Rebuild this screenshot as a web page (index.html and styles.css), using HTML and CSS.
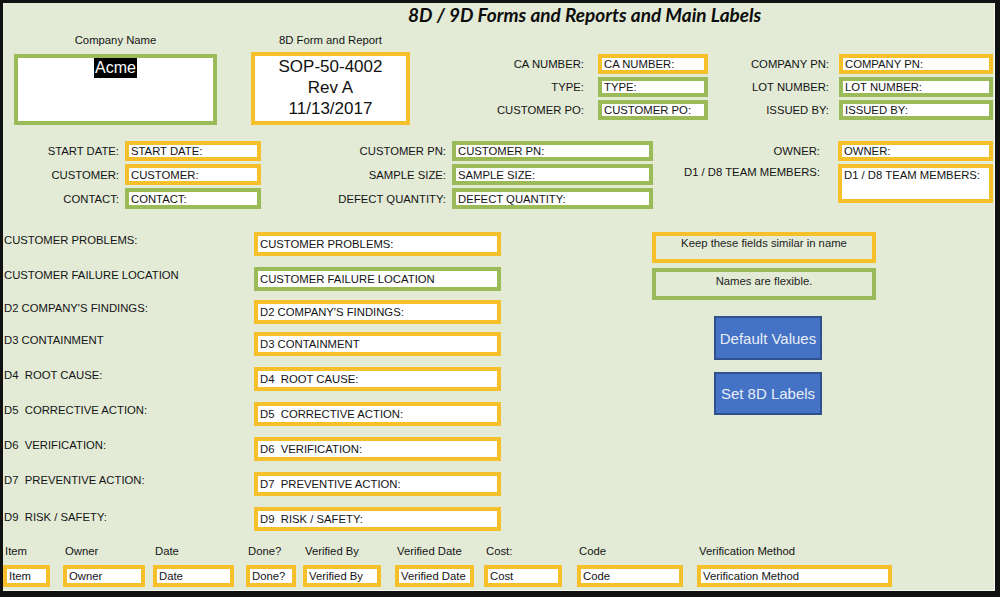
FILE: index.html
```html
<!DOCTYPE html>
<html>
<head>
<meta charset="utf-8">
<link rel="stylesheet" href="styles.css">
</head>
<body>
<div class="frame">
  <div class="title">8D / 9D Forms and Reports and Main Labels</div>

  <div class="row-a">
    <div class="company">
      <div class="cap cap-company">Company Name</div>
      <div class="bigbox green company-box"><span class="sel">Acme</span></div>
    </div>
    <div class="form">
      <div class="cap cap-form">8D Form and Report</div>
      <div class="bigbox gold form-box">SOP-50-4002<br>Rev A<br>11/13/2017</div>
    </div>
    <div class="pairs pairs-ca">
      <div class="lbl">CA NUMBER:</div><div class="fld gold">CA NUMBER:</div>
      <div class="lbl">TYPE:</div><div class="fld green">TYPE:</div>
      <div class="lbl">CUSTOMER PO:</div><div class="fld green">CUSTOMER PO:</div>
    </div>
    <div class="pairs pairs-pn">
      <div class="lbl">COMPANY PN:</div><div class="fld gold">COMPANY PN:</div>
      <div class="lbl">LOT NUMBER:</div><div class="fld green">LOT NUMBER:</div>
      <div class="lbl">ISSUED BY:</div><div class="fld green">ISSUED BY:</div>
    </div>
  </div>

  <div class="row-b">
    <div class="pairs pairs-start">
      <div class="lbl">START DATE:</div><div class="fld gold">START DATE:</div>
      <div class="lbl">CUSTOMER:</div><div class="fld gold">CUSTOMER:</div>
      <div class="lbl">CONTACT:</div><div class="fld green">CONTACT:</div>
    </div>
    <div class="pairs pairs-cpn">
      <div class="lbl">CUSTOMER PN:</div><div class="fld green">CUSTOMER PN:</div>
      <div class="lbl">SAMPLE SIZE:</div><div class="fld green">SAMPLE SIZE:</div>
      <div class="lbl">DEFECT QUANTITY:</div><div class="fld green">DEFECT QUANTITY:</div>
    </div>
    <div class="pairs pairs-owner">
      <div class="lbl">OWNER:</div><div class="fld gold">OWNER:</div>
      <div class="lbl lbl-top">D1 / D8 TEAM MEMBERS:</div><div class="fld gold fld-tall">D1 / D8 TEAM MEMBERS:</div>
    </div>
  </div>

  <div class="row-c">
    <div class="list">
      <div class="item-lbl">CUSTOMER PROBLEMS:</div><div class="fld gold">CUSTOMER PROBLEMS:</div>
      <div class="item-lbl">CUSTOMER FAILURE LOCATION</div><div class="fld green">CUSTOMER FAILURE LOCATION</div>
      <div class="item-lbl">D2 COMPANY'S FINDINGS:</div><div class="fld gold">D2 COMPANY'S FINDINGS:</div>
      <div class="item-lbl">D3 CONTAINMENT</div><div class="fld gold">D3 CONTAINMENT</div>
      <div class="item-lbl">D4&nbsp; ROOT CAUSE:</div><div class="fld gold">D4&nbsp; ROOT CAUSE:</div>
      <div class="item-lbl">D5&nbsp; CORRECTIVE ACTION:</div><div class="fld gold">D5&nbsp; CORRECTIVE ACTION:</div>
      <div class="item-lbl">D6&nbsp; VERIFICATION:</div><div class="fld gold">D6&nbsp; VERIFICATION:</div>
      <div class="item-lbl">D7&nbsp; PREVENTIVE ACTION:</div><div class="fld gold">D7&nbsp; PREVENTIVE ACTION:</div>
      <div class="item-lbl item-lbl-last">D9&nbsp; RISK / SAFETY:</div><div class="fld gold">D9&nbsp; RISK / SAFETY:</div>
    </div>
    <div class="panel">
      <div class="note gold">Keep these fields similar in name</div>
      <div class="note green note-2">Names are flexible.</div>
      <div class="btn">Default Values</div>
      <div class="btn btn-2">Set 8D Labels</div>
    </div>
  </div>

  <div class="row-d">
    <div class="col"><div class="col-lbl">Item</div><div class="fld gold w-item">Item</div></div>
    <div class="col"><div class="col-lbl">Owner</div><div class="fld gold w-owner">Owner</div></div>
    <div class="col"><div class="col-lbl">Date</div><div class="fld gold w-date">Date</div></div>
    <div class="col"><div class="col-lbl">Done?</div><div class="fld gold w-done">Done?</div></div>
    <div class="col"><div class="col-lbl">Verified By</div><div class="fld gold w-vby">Verified By</div></div>
    <div class="col"><div class="col-lbl">Verified Date</div><div class="fld gold w-vdate">Verified Date</div></div>
    <div class="col"><div class="col-lbl">Cost:</div><div class="fld gold w-cost">Cost</div></div>
    <div class="col"><div class="col-lbl">Code</div><div class="fld gold w-code">Code</div></div>
    <div class="col"><div class="col-lbl">Verification Method</div><div class="fld gold w-vm">Verification Method</div></div>
  </div>
</div>
</body>
</html>
```

FILE: styles.css
```css
* { box-sizing: border-box; }
html, body { margin: 0; padding: 0; }
body {
  font-family: "Liberation Sans", Arial, sans-serif;
  font-size: 11.3px;
  color: #141414;
  background: #e3ebd7;
}
.frame {
  width: 1000px;
  height: 597px;
  border-style: solid;
  border-color: #111;
  border-width: 3px 5px 6px 3px;
  background: #e3ebd7;
  box-shadow: inset -1px -1px 0 #f6f9f1;
  overflow: hidden;
}
.gold { border: 4px solid #f6c02b; }
.green { border: 4px solid #9bbb59; }

.title {
  height: 27px;
  padding-left: 405px;
  line-height: 23px;
  font-family: Lato, "Liberation Sans", sans-serif;
  font-weight: 700;
  font-style: italic;
  font-size: 19px;
  color: #0d0d0d;
}

.row-a {
  display: flex;
  align-items: flex-start;
  margin-top: 1px;
  height: 94px;
}
.cap { text-align: center; line-height: 19px; }
.cap-company { height: 23px; }
.cap-form { height: 21px; }
.company { margin-left: 11px; width: 203px; }
.company-box { height: 71px; background: #fff; text-align: center; }
.sel {
  display: inline-block;
  background: #000;
  color: #fff;
  font-size: 16px;
  line-height: 20px;
  padding: 0 1px;
}
.form { margin-left: 34px; width: 159px; }
.form-box {
  height: 73px;
  background: #fff;
  text-align: center;
  font-size: 17px;
  line-height: 21px;
  color: #111;
}

.pairs {
  display: grid;
  grid-auto-rows: 20px;
  row-gap: 3px;
}
.lbl {
  display: flex;
  align-items: center;
  justify-content: flex-end;
  white-space: nowrap;
}
.fld {
  background: #fff;
  display: flex;
  align-items: center;
  padding-left: 2px;
  white-space: nowrap;
  overflow: hidden;
}
.pairs-ca { margin-left: 60px; margin-top: 23px; grid-template-columns: 114px 110px; column-gap: 14px; }
.pairs-pn { margin-left: 12px; margin-top: 23px; grid-template-columns: 109px 154px; column-gap: 10px; }

.row-b {
  display: flex;
  align-items: flex-start;
  margin-top: 16px;
  height: 69px;
}
.pairs-start { grid-template-rows: 20px 21px 21px; grid-template-columns: 116px 136px; column-gap: 6px; }
.pairs-cpn { margin-left: 29px; grid-template-rows: 20px 21px 21px; grid-template-columns: 156px 201px; column-gap: 6px; }
.pairs-owner { margin-left: 27px; grid-template-columns: 140px 155px; column-gap: 18px; grid-template-rows: 20px 39px; }
.lbl-top { align-items: flex-start; padding-top: 2px; }
.fld-tall { align-items: flex-start; padding-top: 1px; }

.row-c {
  display: flex;
  align-items: flex-start;
  margin-top: 22px;
  height: 296px;
}
.list {
  display: grid;
  grid-template-columns: 251px 247px;
  grid-template-rows: 35px 33px 32px 35px 35px 35px 35px 35px 24px;
}
.list .fld { height: 24px; }
.item-lbl { padding-left: 1px; padding-top: 2px; white-space: nowrap; }
.item-lbl-last { padding-top: 4px; }
.panel { margin-left: 151px; width: 224px; }
.note {
  height: 31px;
  text-align: center;
  padding-top: 1px;
  color: #1c1c1c;
}
.note-2 { height: 32px; margin-top: 5px; padding-top: 3px; }
.btn {
  margin-left: 62px;
  margin-top: 16px;
  width: 108px;
  height: 44px;
  background: #4472c4;
  border: 2px solid #2f528f;
  color: #e8eef8;
  font-size: 15px;
  display: flex;
  align-items: center;
  justify-content: center;
}
.btn-2 { margin-top: 12px; height: 43px; }

.row-d {
  display: grid;
  grid-template-columns: 60px 90px 93px 57px 92px 89px 93px 120px 200px;
  margin-top: 15px;
}
.col-lbl { height: 22px; line-height: 16px; padding-left: 2px; white-space: nowrap; }
.row-d .fld { height: 22px; }
.w-item { width: 47px; }
.w-owner { width: 82px; }
.w-date { width: 81px; }
.w-done { width: 50px; }
.w-vby { width: 78px; }
.w-vdate { width: 79px; }
.w-cost { width: 78px; }
.w-code { width: 106px; }
.w-vm { width: 195px; }
```
